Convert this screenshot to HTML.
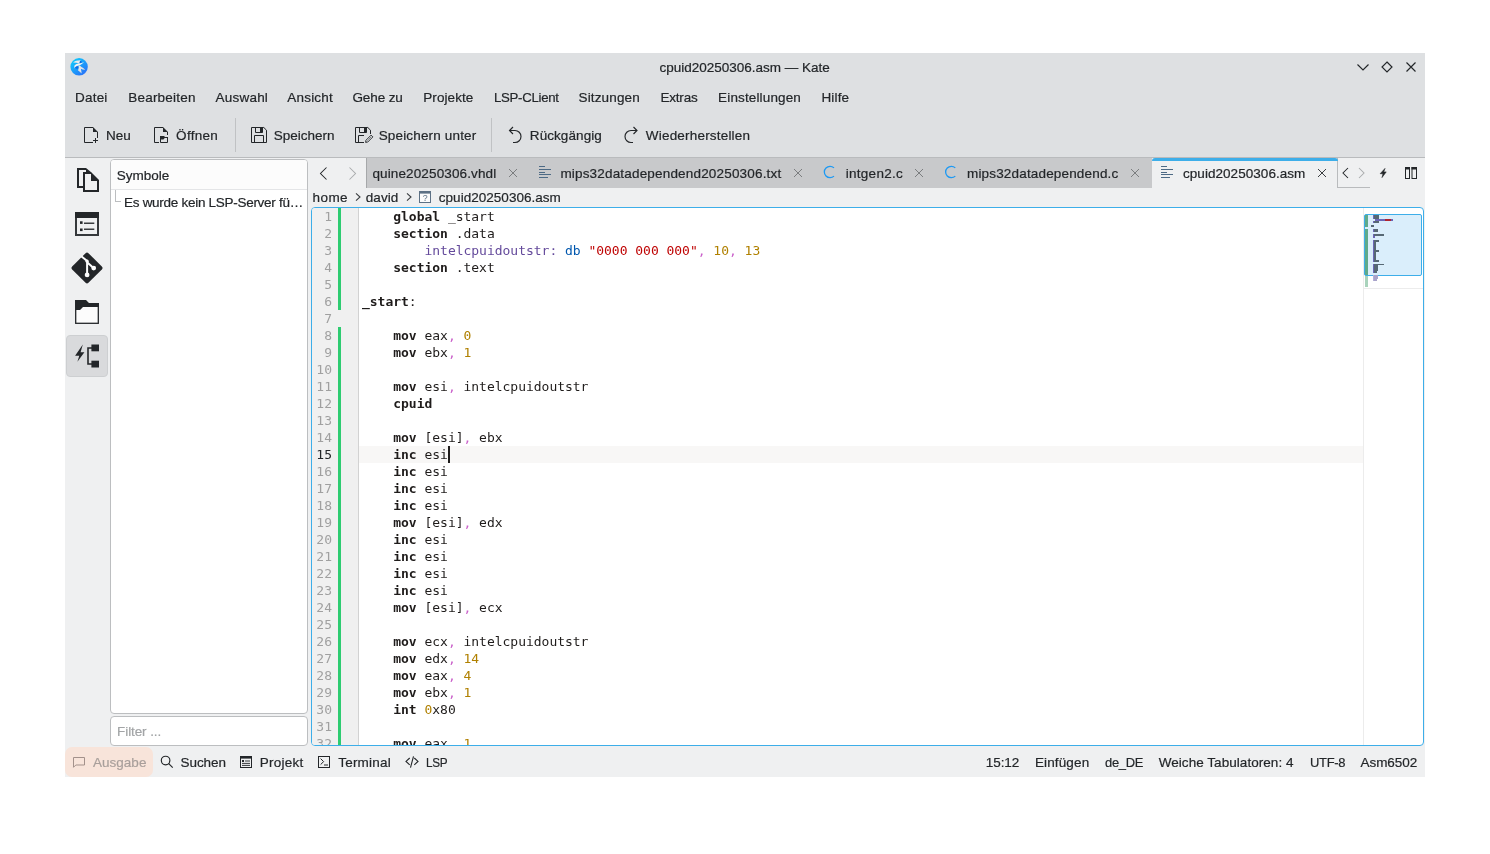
<!DOCTYPE html>
<html lang="de"><head><meta charset="utf-8"><title>cpuid20250306.asm — Kate</title>
<style>
*{box-sizing:border-box;margin:0;padding:0}
html,body{width:1490px;height:854px;background:#fff;overflow:hidden}
body{position:relative;font-family:"Liberation Sans", "DejaVu Sans", sans-serif;font-size:13.5px;color:#232629}
.a{position:absolute}
.t{position:absolute;white-space:pre;line-height:20px;height:20px;-webkit-text-stroke:0.2px}
#win{position:absolute;left:65px;top:53px;width:1360px;height:724px;background:#eff0f1;overflow:hidden}
#pg{position:absolute;left:-65px;top:-53px;width:1490px;height:854px;will-change:transform}
#head{position:absolute;left:65px;top:53px;width:1360px;height:104px;background:#dee0e2}
#headline{position:absolute;left:65px;top:157px;width:1360px;height:1px;background:#b9bbbd}
svg{position:absolute;left:0;top:0;overflow:visible}
#ed{position:absolute;left:311px;top:207px;width:1113px;height:539px;background:#fff;border:1px solid #3daee9;border-radius:4px;overflow:hidden}
#edi{position:absolute;left:-312px;top:-208px;width:1490px;height:854px}
.cl{position:absolute;left:362px;letter-spacing:-0.02px;white-space:pre;font-family:"DejaVu Sans Mono", "Liberation Mono", monospace;font-size:13px;line-height:17px;height:17px;color:#1f1c1b}
.ln{position:absolute;left:300px;width:32px;text-align:right;font-family:"DejaVu Sans Mono", "Liberation Mono", monospace;font-size:13px;line-height:17px;height:17px;color:#a0a0a0}
b{font-weight:bold}
.lb{color:#644a9b}
.db{color:#0057ae}
.s{color:#bf0303}
.c{color:#ca60ca}
.n{color:#b08000}
</style></head>
<body>
<div id="win"><div id="pg">
<div id="head"></div><div id="headline"></div>
<div class="a" style="left:235px;top:118px;width:1px;height:34px;background:#c0c2c4"></div>
<div class="a" style="left:491px;top:118px;width:1px;height:34px;background:#c0c2c4"></div>
<div class="a" style="left:66px;top:335px;width:42px;height:42px;background:#d9dadc;border:1px solid #cdcfd1;border-radius:4px"></div>
<div class="a" style="left:110px;top:159px;width:198px;height:555px;background:#fff;border:1px solid #bcbec0;border-radius:4px"></div>
<div class="a" style="left:111px;top:160px;width:196px;height:30px;background:#fcfcfc;border-bottom:1px solid #e4e5e7;border-radius:3px 3px 0 0"></div>
<div class="a" style="left:115px;top:190px;width:1px;height:12px;background:#bcbec0"></div><div class="a" style="left:115px;top:201px;width:6px;height:1px;background:#bcbec0"></div>
<div class="a" style="left:110px;top:716px;width:198px;height:30px;background:#fff;border:1px solid #bcbec0;border-radius:4px"></div>
<div class="a" style="left:366px;top:158px;width:786px;height:30px;background:#c8c9cb;border-left:1px solid #a6a8aa"></div>
<div class="a" style="left:1152px;top:158px;width:186px;height:30px;background:#eff0f1;border-right:1px solid #b9bbbd"></div>
<div class="a" style="left:1152px;top:158px;width:186px;height:3px;background:#3daee9;border-radius:3px 3px 0 0"></div>
<div class="a" style="left:1338px;top:187px;width:32px;height:1px;background:#b9bbbd"></div>
<div class="a" style="left:65px;top:747px;width:88px;height:30px;background:#f8e4da;border-radius:7px"></div>
<div class="t" style="left:659.5px;top:58px;letter-spacing:-0.007px;">cpuid20250306.asm — Kate</div>
<div class="t" style="left:75.1px;top:88px;letter-spacing:0.177px;">Datei</div>
<div class="t" style="left:128.3px;top:88px;letter-spacing:0.199px;">Bearbeiten</div>
<div class="t" style="left:215.5px;top:88px;letter-spacing:0.224px;">Auswahl</div>
<div class="t" style="left:287.2px;top:88px;letter-spacing:0.231px;">Ansicht</div>
<div class="t" style="left:352.4px;top:88px;letter-spacing:-0.092px;">Gehe zu</div>
<div class="t" style="left:423.3px;top:88px;letter-spacing:0.071px;">Projekte</div>
<div class="t" style="left:493.9px;top:88px;letter-spacing:-0.300px;transform:scaleX(0.9796);transform-origin:0 0;">LSP-CLient</div>
<div class="t" style="left:578.5px;top:88px;letter-spacing:0.150px;">Sitzungen</div>
<div class="t" style="left:660.4px;top:88px;letter-spacing:-0.178px;">Extras</div>
<div class="t" style="left:718.1px;top:88px;letter-spacing:0.141px;">Einstellungen</div>
<div class="t" style="left:821.4px;top:88px;letter-spacing:0.177px;">Hilfe</div>
<div class="t" style="left:105.9px;top:126px;letter-spacing:0.045px;">Neu</div>
<div class="t" style="left:176.1px;top:126px;letter-spacing:0.284px;">Öffnen</div>
<div class="t" style="left:273.8px;top:126px;letter-spacing:0.000px;">Speichern</div>
<div class="t" style="left:378.7px;top:126px;letter-spacing:0.159px;">Speichern unter</div>
<div class="t" style="left:529.8px;top:126px;letter-spacing:0.080px;">Rückgängig</div>
<div class="t" style="left:645.8px;top:126px;letter-spacing:0.194px;">Wiederherstellen</div>
<div class="t" style="left:116.7px;top:166px;letter-spacing:0.010px;">Symbole</div>
<div class="t" style="left:124.0px;top:193px;letter-spacing:-0.283px;">Es wurde kein LSP-Server fü…</div>
<div class="t" style="left:117.1px;top:722px;letter-spacing:-0.102px;color:#a2a4a6">Filter ...</div>
<div class="t" style="left:372.4px;top:164px;letter-spacing:0.132px;">quine20250306.vhdl</div>
<div class="t" style="left:560.4px;top:164px;letter-spacing:0.179px;">mips32datadependend20250306.txt</div>
<div class="t" style="left:845.7px;top:164px;letter-spacing:0.289px;">intgen2.c</div>
<div class="t" style="left:967.0px;top:164px;letter-spacing:0.168px;">mips32datadependend.c</div>
<div class="t" style="left:1183.0px;top:164px;letter-spacing:0.047px;">cpuid20250306.asm</div>
<div class="t" style="left:312.6px;top:188px;letter-spacing:0.405px;">home</div>
<div class="t" style="left:365.8px;top:188px;letter-spacing:0.064px;">david</div>
<div class="t" style="left:438.8px;top:188px;letter-spacing:0.030px;">cpuid20250306.asm</div>
<div class="t" style="left:93.1px;top:753px;letter-spacing:0.000px;color:#a89f9b">Ausgabe</div>
<div class="t" style="left:180.6px;top:753px;letter-spacing:-0.083px;">Suchen</div>
<div class="t" style="left:259.8px;top:753px;letter-spacing:0.224px;">Projekt</div>
<div class="t" style="left:338.2px;top:753px;letter-spacing:0.223px;">Terminal</div>
<div class="t" style="left:426.0px;top:753px;letter-spacing:-0.300px;transform:scaleX(0.8688);transform-origin:0 0;">LSP</div>
<div class="t" style="left:985.8px;top:753px;letter-spacing:-0.079px;">15:12</div>
<div class="t" style="left:1034.9px;top:753px;letter-spacing:0.138px;">Einfügen</div>
<div class="t" style="left:1104.6px;top:753px;letter-spacing:-0.300px;transform:scaleX(0.9577);transform-origin:0 0;">de_DE</div>
<div class="t" style="left:1158.7px;top:753px;letter-spacing:0.050px;">Weiche Tabulatoren: 4</div>
<div class="t" style="left:1309.6px;top:753px;letter-spacing:-0.300px;transform:scaleX(0.9605);transform-origin:0 0;">UTF-8</div>
<div class="t" style="left:1360.6px;top:753px;letter-spacing:-0.078px;">Asm6502</div>
<svg width="1490" height="854" viewBox="0 0 1490 854" fill="none" stroke="#232629" stroke-width="1">
<defs><linearGradient id="kg" x1="0.15" y1="0.1" x2="0.85" y2="0.95"><stop offset="0" stop-color="#10c8fc"/><stop offset="1" stop-color="#2a6ff8"/></linearGradient></defs>
<!-- kate app icon -->
<g stroke="none">
<circle cx="79.1" cy="66.8" r="8.7" fill="url(#kg)"/>
<ellipse cx="80.4" cy="62" rx="1.3" ry="0.9" fill="#0a60e2"/>
<ellipse cx="76.9" cy="67.5" rx="1.7" ry="1.2" fill="#0c6ae8"/>
<path d="M73.1 62.6 C75 61.1 77.5 60.2 80.6 60.3 C79.8 61.2 79.4 62.2 79.1 63.4 C77.3 62.7 75 62.5 73.1 62.6Z" fill="#ececec"/>
<path d="M84.1 62 C82 64.4 79.5 65.4 76.9 66.1 C75.5 66.6 74.9 67.3 74.6 68.4 C73.8 66.2 74.5 64.6 76.6 64 C79.3 63.4 81.9 63.1 84.1 62Z" fill="#f4f4f4"/>
<path d="M78.6 65.5 C79.8 65.5 80.6 66 81.1 66.8 C82.4 67.5 84 68.6 85.2 69.7 C83.6 69.8 82 69.4 80.9 68.8 C81.2 70.4 81.6 72.1 81.6 73.6 C80.4 72.5 79.1 71.1 77.9 70.3 C78.8 68.9 79 67 78.6 65.5Z" fill="#e4e4e4"/>
</g>
<!-- window buttons -->
<g stroke-width="1.15">
<path d="M1357.5 64.5 L1363 70 L1368.5 64.5"/>
<path d="M1387 62 L1392 67 L1387 72 L1382 67Z"/>
<path d="M1406.5 62.5 L1415.5 71.5 M1415.5 62.5 L1406.5 71.5"/>
</g>
<!-- toolbar: new -->
<g transform="translate(80 124)">
<path d="M13 3.5 H4.5 V18.5 H13 M17.5 8 V14 M13 16.5 H18 M15.5 14 V19"/>
<path d="M13 3 L18 8 H13Z" fill="#232629" stroke="none"/>
</g>
<!-- toolbar: open -->
<g transform="translate(150 124)">
<path d="M13 3.5 H4.5 V18.5 H9 M17.5 8 V11"/>
<path d="M13 3 L18 8 H13Z" fill="#232629" stroke="none"/>
<path d="M10.5 13 V18.5 H17.5 V14"/>
<path d="M10 12 H14 L15 13 H18 V14.1 H14.7 L13.4 15.4 H10Z" fill="#232629" stroke="none"/>
</g>
<!-- toolbar: save -->
<g transform="translate(248 124)">
<path d="M3.5 3.5 H15.8 L18.5 6.2 V18.5 H3.5Z"/>
<path d="M7.5 3.5 V8.5 H14.5 V3.5"/>
<rect x="12" y="4" width="2.5" height="4.5" fill="#232629" stroke="none"/>
<path d="M6.5 18.5 V11.5 H15.5 V18.5"/>
</g>
<!-- toolbar: save as -->
<g transform="translate(352 124)">
<path d="M12 18.5 H3.5 V3.5 H15.8 L18.5 6.2 V10"/>
<path d="M7.5 3.5 V8.5 H14.5 V3.5"/>
<rect x="12" y="4" width="2.5" height="4.5" fill="#232629" stroke="none"/>
<path d="M6.5 18.5 V11.5 H12"/>
<path d="M13.6 18.4 L13.9 16.3 L19.1 11.1 L20.9 12.9 L15.7 18.1Z" stroke-width="0.9"/>
<path d="M14.6 17.4 L19.6 12.4" stroke-width="0.7" stroke-dasharray="1 0.7"/>
</g>
<!-- undo / redo -->
<g stroke-width="1.15">
<path d="M509.5 130.5 H515 a6 6 0 0 1 0 12 H513 M513 127 L509.5 130.5 L513 134"/>
<path d="M637 130.5 H631 a6 6 0 0 0 0 12 H633 M633.5 127 L637 130.5 L633.5 134"/>
</g>
<!-- sidebar 1: documents -->
<g stroke-width="2" stroke-linejoin="miter">
<path d="M86 169 H78 V187 H83"/>
<path d="M91 173 H84 V191 H98 V180"/>
</g>
<g stroke="none" fill="#232629">
<path d="M86 168 L91.5 172.5 H86Z"/>
<path d="M91 172 L99 180 V181 H91Z"/>
</g>
<!-- sidebar 2: list view -->
<g>
<rect x="76" y="213" width="22" height="22" stroke-width="2" stroke="#35383b"/>
<rect x="75" y="212" width="24" height="6" fill="#232629" stroke="none"/>
<rect x="80" y="221.3" width="2.6" height="2.6" fill="#232629" stroke="none"/>
<rect x="80" y="228.5" width="2.6" height="2.6" fill="#232629" stroke="none"/>
<path d="M84 223.2 H94.3 M84 229.3 H94.3" stroke-width="1.4" stroke="#3a3d40"/>
</g>
<!-- sidebar 3: git -->
<g>
<rect x="75.5" y="256.5" width="23" height="23" rx="2" transform="rotate(45 87 268)" fill="#232629" stroke="none"/>
<path d="M81.3 256.2 L87.1 261 V274.5 M87.1 262.2 L93.5 268" stroke="#fcfcfc" stroke-width="2"/>
<circle cx="87.1" cy="274.9" r="2.4" fill="#fcfcfc" stroke="none"/>
<circle cx="93.7" cy="268.1" r="2.4" fill="#fcfcfc" stroke="none"/>
<circle cx="87.1" cy="261.2" r="1.6" fill="#fcfcfc" stroke="none"/>
</g>
<!-- sidebar 4: folder -->
<g>
<rect x="75.7" y="306" width="22.6" height="17.3" fill="#fcfcfc" stroke-width="1.3"/>
<path d="M75 300 H86 L89 303 H99 V307 H83 L80 310 H75Z" fill="#232629" stroke="none"/>
</g>
<!-- sidebar 5: lsp symbols -->
<g>
<path d="M82.8 344.6 L75.1 355.8 H79.3 L77.4 361.8 L84.4 352.2 H80.6Z" fill="#232629" stroke="none"/>
<path d="M92 348 H88 V364 H92 M88 356" stroke-width="1.6"/>
<rect x="91.4" y="344.5" width="7.6" height="6.8" fill="#232629" stroke="none"/>
<rect x="91.4" y="360.7" width="7.6" height="6.8" fill="#232629" stroke="none"/>
</g>
<!-- tab bar nav arrows -->
<g stroke-width="1.05">
<path d="M326.5 167.5 L320.5 173.5 L326.5 179.5"/>
<path d="M349.5 167.5 L355.5 173.5 L349.5 179.5" stroke="#a9abad"/>
<path d="M1348 168 L1343 173 L1348 178"/>
<path d="M1359 168 L1364 173 L1359 178" stroke="#a9abad"/>
</g>
<!-- tab close buttons -->
<g stroke="#7b7d7f" stroke-width="1">
<path d="M509 169 L517 177 M517 169 L509 177"/>
<path d="M794 169 L802 177 M802 169 L794 177"/>
<path d="M915 169 L923 177 M923 169 L915 177"/>
<path d="M1131 169 L1139 177 M1139 169 L1131 177"/>
</g>
<path d="M1318 169 L1326 177 M1326 169 L1318 177" stroke="#3b3e41" stroke-width="1"/>
<!-- tab text-file icons -->
<g stroke="#4d6a85" stroke-width="1">
<path d="M539 166.5 H545 M539 169.5 H551 M539 172.5 H545 M539 174.5 H551 M539 177.5 H548"/>
<path d="M1161 166.5 H1167 M1161 169.5 H1173 M1161 172.5 H1167 M1161 174.5 H1173 M1161 177.5 H1170"/>
</g>
<!-- tab C icons -->
<g stroke="#1d99f3" stroke-width="1.3">
<path d="M834 167.9 A5.7 5.7 0 1 0 834 176.1"/>
<path d="M955.3 167.9 A5.7 5.7 0 1 0 955.3 176.1"/>
</g>
<!-- tab bar right: bolt + split -->
<path d="M1385 168.4 L1380.2 173.7 H1383 L1382 177.6 L1386.2 171.9 H1383.7Z" fill="#232629" stroke="#232629" stroke-width="0.6" stroke-linejoin="round"/>
<g>
<rect x="1405.5" y="167.5" width="4" height="11"/>
<rect x="1412" y="167.5" width="4.5" height="11"/>
<path d="M1405 168.2 H1410 M1411.5 168.2 H1417" stroke-width="2.4"/>
</g>
<!-- breadcrumb -->
<g stroke-width="1.1" stroke="#3a3d40">
<path d="M356 193.3 L360 197 L356 200.7"/>
<path d="M407 193.3 L411 197 L407 200.7"/>
</g>
<g>
<rect x="419.5" y="191.5" width="11" height="11" fill="#fcfcfc" stroke="#5d7185"/>
<rect x="419" y="191" width="12" height="2.6" fill="#5d7185" stroke="none"/>
<text x="425.2" y="201" font-family="Liberation Sans, sans-serif" font-size="8.8" text-anchor="middle" fill="#5d7185" stroke="none">?</text>
</g>
<!-- status bar icons -->
<path d="M73.5 757.5 H84.5 V765 H75.8 L73.5 767.3Z" stroke="#a3918b"/>
<g stroke-width="1.15">
<circle cx="165.6" cy="760.5" r="4.3"/>
<path d="M168.7 763.6 L172.7 767.6"/>
</g>
<g>
<rect x="240.5" y="756.5" width="11" height="11"/>
<rect x="240" y="756" width="12" height="2.6" fill="#232629" stroke="none"/>
<rect x="242" y="760" width="2" height="2" fill="#232629" stroke="none"/>
<path d="M245 761 H250 M242 763.4 H250 M242 765.4 H250" stroke-width="0.9"/>
</g>
<g>
<rect x="318.5" y="756.5" width="11" height="11"/>
<path d="M320.6 758.6 L323.6 761.6 L320.6 764.6 M324 765 H328"/>
</g>
<g stroke-width="1.1">
<path d="M409.7 758 L406 761.4 L409.7 764.8 M414.3 758 L418 761.4 L414.3 764.8 M413.5 756.3 L410.5 767.6"/>
</g>
</svg>

<div id="ed"><div id="edi">
<div class="a" style="left:312px;top:208px;width:46px;height:538px;background:#f0f0f0"></div>
<div class="a" style="left:358px;top:208px;width:1px;height:538px;background:#d2d2d2"></div>
<div class="a" style="left:359px;top:446px;width:1004px;height:17px;background:#f8f7f6"></div>
<div class="a" style="left:338px;top:208px;width:3px;height:102px;background:#2ecc71"></div>
<div class="a" style="left:338px;top:327px;width:3px;height:435px;background:#2ecc71"></div>
<div class="ln" style="top:208px">1</div>
<div class="cl" style="top:208px">    <b>global</b> _start</div>
<div class="ln" style="top:225px">2</div>
<div class="cl" style="top:225px">    <b>section</b> .data</div>
<div class="ln" style="top:242px">3</div>
<div class="cl" style="top:242px">        <span class="lb">intelcpuidoutstr:</span> <span class="db">db</span> <span class="s">"0000 000 000"</span><span class="c">,</span> <span class="n">10</span><span class="c">,</span> <span class="n">13</span></div>
<div class="ln" style="top:259px">4</div>
<div class="cl" style="top:259px">    <b>section</b> .text</div>
<div class="ln" style="top:276px">5</div>
<div class="ln" style="top:293px">6</div>
<div class="cl" style="top:293px"><b>_start</b>:</div>
<div class="ln" style="top:310px">7</div>
<div class="ln" style="top:327px">8</div>
<div class="cl" style="top:327px">    <b>mov</b> eax<span class="c">,</span> <span class="n">0</span></div>
<div class="ln" style="top:344px">9</div>
<div class="cl" style="top:344px">    <b>mov</b> ebx<span class="c">,</span> <span class="n">1</span></div>
<div class="ln" style="top:361px">10</div>
<div class="ln" style="top:378px">11</div>
<div class="cl" style="top:378px">    <b>mov</b> esi<span class="c">,</span> intelcpuidoutstr</div>
<div class="ln" style="top:395px">12</div>
<div class="cl" style="top:395px">    <b>cpuid</b></div>
<div class="ln" style="top:412px">13</div>
<div class="ln" style="top:429px">14</div>
<div class="cl" style="top:429px">    <b>mov</b> [esi]<span class="c">,</span> ebx</div>
<div class="ln" style="top:446px;color:#232629">15</div>
<div class="cl" style="top:446px">    <b>inc</b> esi</div>
<div class="ln" style="top:463px">16</div>
<div class="cl" style="top:463px">    <b>inc</b> esi</div>
<div class="ln" style="top:480px">17</div>
<div class="cl" style="top:480px">    <b>inc</b> esi</div>
<div class="ln" style="top:497px">18</div>
<div class="cl" style="top:497px">    <b>inc</b> esi</div>
<div class="ln" style="top:514px">19</div>
<div class="cl" style="top:514px">    <b>mov</b> [esi]<span class="c">,</span> edx</div>
<div class="ln" style="top:531px">20</div>
<div class="cl" style="top:531px">    <b>inc</b> esi</div>
<div class="ln" style="top:548px">21</div>
<div class="cl" style="top:548px">    <b>inc</b> esi</div>
<div class="ln" style="top:565px">22</div>
<div class="cl" style="top:565px">    <b>inc</b> esi</div>
<div class="ln" style="top:582px">23</div>
<div class="cl" style="top:582px">    <b>inc</b> esi</div>
<div class="ln" style="top:599px">24</div>
<div class="cl" style="top:599px">    <b>mov</b> [esi]<span class="c">,</span> ecx</div>
<div class="ln" style="top:616px">25</div>
<div class="ln" style="top:633px">26</div>
<div class="cl" style="top:633px">    <b>mov</b> ecx<span class="c">,</span> intelcpuidoutstr</div>
<div class="ln" style="top:650px">27</div>
<div class="cl" style="top:650px">    <b>mov</b> edx<span class="c">,</span> <span class="n">14</span></div>
<div class="ln" style="top:667px">28</div>
<div class="cl" style="top:667px">    <b>mov</b> eax<span class="c">,</span> <span class="n">4</span></div>
<div class="ln" style="top:684px">29</div>
<div class="cl" style="top:684px">    <b>mov</b> ebx<span class="c">,</span> <span class="n">1</span></div>
<div class="ln" style="top:701px">30</div>
<div class="cl" style="top:701px">    <b>int</b> <span class="n">0</span>x80</div>
<div class="ln" style="top:718px">31</div>
<div class="ln" style="top:735px">32</div>
<div class="cl" style="top:735px">    <b>mov</b> eax<span class="c">,</span> <span class="n">1</span></div>
<div class="a" style="left:448px;top:446px;width:2px;height:17px;background:#1f1c1b"></div>
<div class="a" style="left:1363px;top:208px;width:1px;height:538px;background:#ececec"></div>
<div class="a" style="left:1364px;top:288px;width:59px;height:1px;background:#ececec"></div>
<div class="a" style="left:1365px;top:275px;width:3px;height:12px;background:#a9d3bc"></div>
<div class="a" style="left:1364px;top:214px;width:58px;height:62px;background:#daeefb;border:1px solid #3daee9;border-radius:2px"></div>
<div class="a" style="left:1365px;top:215px;width:3px;height:12px;background:#5faa8b"></div>
<div class="a" style="left:1365px;top:229px;width:3px;height:46px;background:#5faa8b"></div>
<svg width="1490" height="854" viewBox="0 0 1490 854" shape-rendering="crispEdges">
<rect x="1373.0" y="215.00" width="5.9" height="1.94" fill="#566874"/>
<rect x="1373.0" y="215.00" width="1.2" height="1.94" fill="#6b66b6"/>
<rect x="1373.0" y="216.94" width="5.9" height="1.94" fill="#566874"/>
<rect x="1373.0" y="216.94" width="1.2" height="1.94" fill="#6b66b6"/>
<rect x="1375.0" y="218.88" width="10" height="1.94" fill="#6b66b6"/>
<rect x="1385.0" y="218.88" width="6" height="1.94" fill="#b0242f"/>
<rect x="1391.0" y="218.88" width="2" height="1.94" fill="#6b66b6"/>
<rect x="1373.0" y="220.82" width="5.9" height="1.94" fill="#566874"/>
<rect x="1373.0" y="220.82" width="1.2" height="1.94" fill="#6b66b6"/>
<rect x="1371.0" y="224.70" width="3.1" height="1.94" fill="#566874"/>
<rect x="1373.0" y="228.58" width="4.5" height="1.94" fill="#566874"/>
<rect x="1373.0" y="228.58" width="1.2" height="1.94" fill="#6b66b6"/>
<rect x="1373.0" y="230.52" width="4.5" height="1.94" fill="#566874"/>
<rect x="1373.0" y="230.52" width="1.2" height="1.94" fill="#6b66b6"/>
<rect x="1373.0" y="234.40" width="11.2" height="1.94" fill="#566874"/>
<rect x="1373.0" y="234.40" width="1.2" height="1.94" fill="#6b66b6"/>
<rect x="1373.0" y="236.34" width="2.2" height="1.94" fill="#566874"/>
<rect x="1373.0" y="236.34" width="2.2" height="1.94" fill="#6b66b6"/>
<rect x="1373.0" y="240.22" width="6.3" height="1.94" fill="#566874"/>
<rect x="1373.0" y="240.22" width="1.2" height="1.94" fill="#6b66b6"/>
<rect x="1373.0" y="242.16" width="3.1" height="1.94" fill="#566874"/>
<rect x="1373.0" y="242.16" width="1.2" height="1.94" fill="#6b66b6"/>
<rect x="1373.0" y="244.10" width="3.1" height="1.94" fill="#566874"/>
<rect x="1373.0" y="244.10" width="1.2" height="1.94" fill="#6b66b6"/>
<rect x="1373.0" y="246.04" width="3.1" height="1.94" fill="#566874"/>
<rect x="1373.0" y="246.04" width="1.2" height="1.94" fill="#6b66b6"/>
<rect x="1373.0" y="247.98" width="3.1" height="1.94" fill="#566874"/>
<rect x="1373.0" y="247.98" width="1.2" height="1.94" fill="#6b66b6"/>
<rect x="1373.0" y="249.92" width="6.3" height="1.94" fill="#566874"/>
<rect x="1373.0" y="249.92" width="1.2" height="1.94" fill="#6b66b6"/>
<rect x="1373.0" y="251.86" width="3.1" height="1.94" fill="#566874"/>
<rect x="1373.0" y="251.86" width="1.2" height="1.94" fill="#6b66b6"/>
<rect x="1373.0" y="253.80" width="3.1" height="1.94" fill="#566874"/>
<rect x="1373.0" y="253.80" width="1.2" height="1.94" fill="#6b66b6"/>
<rect x="1373.0" y="255.74" width="3.1" height="1.94" fill="#566874"/>
<rect x="1373.0" y="255.74" width="1.2" height="1.94" fill="#6b66b6"/>
<rect x="1373.0" y="257.68" width="3.1" height="1.94" fill="#566874"/>
<rect x="1373.0" y="257.68" width="1.2" height="1.94" fill="#6b66b6"/>
<rect x="1373.0" y="259.62" width="6.3" height="1.94" fill="#566874"/>
<rect x="1373.0" y="259.62" width="1.2" height="1.94" fill="#6b66b6"/>
<rect x="1373.0" y="263.50" width="11.2" height="1.94" fill="#566874"/>
<rect x="1373.0" y="263.50" width="1.2" height="1.94" fill="#6b66b6"/>
<rect x="1373.0" y="265.44" width="5.0" height="1.94" fill="#566874"/>
<rect x="1373.0" y="265.44" width="1.2" height="1.94" fill="#6b66b6"/>
<rect x="1373.0" y="267.38" width="4.5" height="1.94" fill="#566874"/>
<rect x="1373.0" y="267.38" width="1.2" height="1.94" fill="#6b66b6"/>
<rect x="1373.0" y="269.32" width="4.5" height="1.94" fill="#566874"/>
<rect x="1373.0" y="269.32" width="1.2" height="1.94" fill="#6b66b6"/>
<rect x="1373.0" y="271.26" width="3.6" height="1.94" fill="#566874"/>
<rect x="1373.0" y="271.26" width="1.2" height="1.94" fill="#6b66b6"/>
<rect x="1373.0" y="275.14" width="4.5" height="1.94" fill="#a9a3c9"/>
<rect x="1373.0" y="275.14" width="1.2" height="1.94" fill="#b3aed8"/>
<rect x="1373.0" y="277.08" width="4.5" height="1.94" fill="#a9a3c9"/>
<rect x="1373.0" y="277.08" width="1.2" height="1.94" fill="#b3aed8"/>
<rect x="1373.0" y="279.02" width="3.6" height="1.94" fill="#a9a3c9"/>
<rect x="1373.0" y="279.02" width="1.2" height="1.94" fill="#b3aed8"/>
</svg>
</div></div>
</div></div>
</body></html>
